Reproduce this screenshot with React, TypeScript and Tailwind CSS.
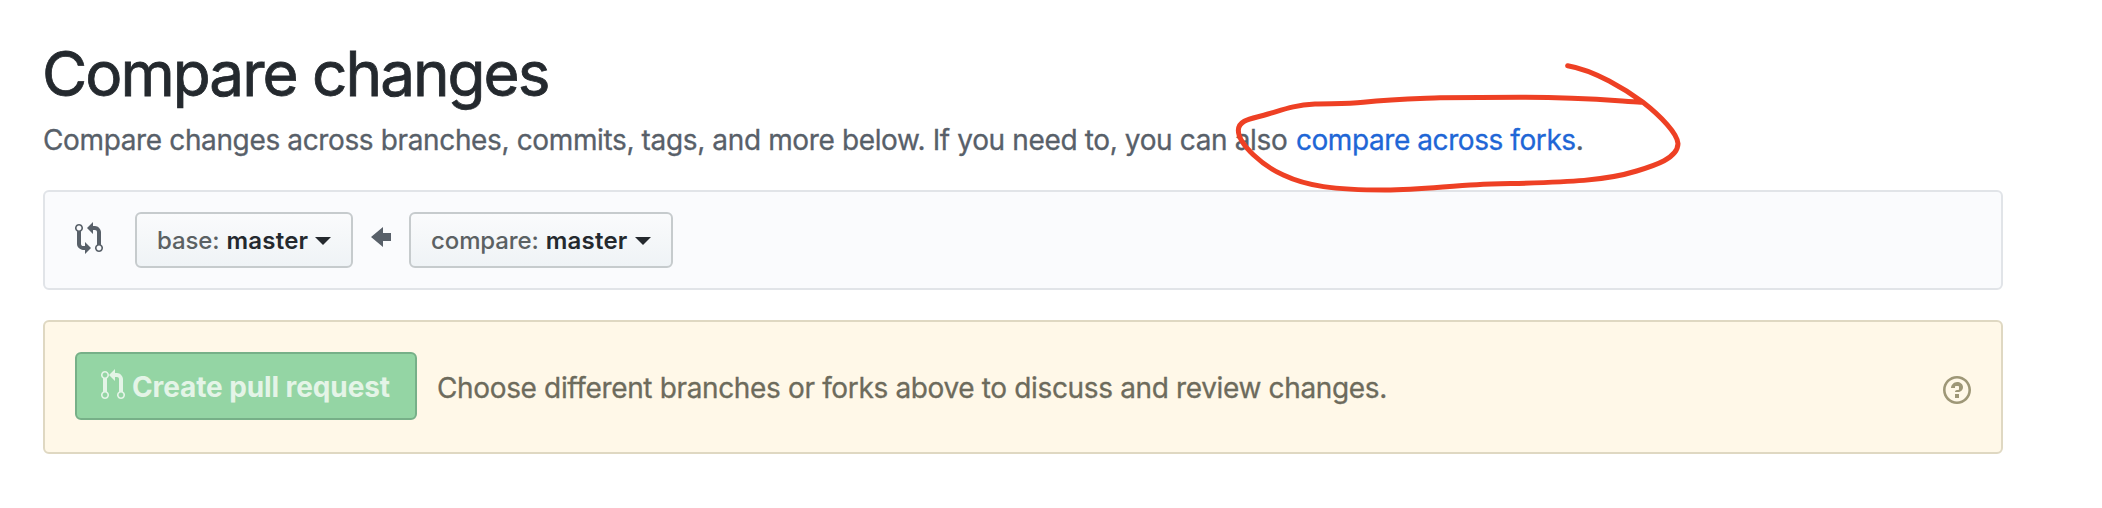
import type { ReactNode } from "react";

const icons = {
  compare: {
    width: 14,
    d: "M5 12H4c-.27-.02-.48-.11-.69-.31-.21-.2-.3-.42-.31-.69V4.72A1.993 1.993 0 0 0 2 1a1.993 1.993 0 0 0-1 3.72V11c.03.78.34 1.47.94 2.06.6.59 1.28.91 2.06.94h1v2l3-3-3-3v2zM2 1.8c.66 0 1.2.55 1.2 1.2 0 .65-.55 1.2-1.2 1.2C1.35 4.2.8 3.65.8 3c0-.65.55-1.2 1.2-1.2zm11 9.48V5c-.03-.78-.34-1.47-.94-2.06-.6-.59-1.28-.91-2.06-.94H9V0L6 3l3 3V4h1c.27.02.48.11.69.31.21.2.3.42.31.69v6.28A1.993 1.993 0 0 0 12 15a1.993 1.993 0 0 0 1-3.72zm-1 2.92c-.66 0-1.2-.55-1.2-1.2 0-.65.55-1.2 1.2-1.2.65 0 1.2.55 1.2 1.2 0 .65-.55 1.2-1.2 1.2z",
  },
  pullRequest: {
    width: 12,
    d: "M11 11.28V5c-.03-.78-.34-1.47-.94-2.06C9.46 2.35 8.78 2.03 8 2H7V0L4 3l3 3V4h1c.27.02.48.11.69.31.21.2.3.42.31.69v6.28A1.993 1.993 0 0 0 10 15a1.993 1.993 0 0 0 1-3.72zm-1 2.92c-.66 0-1.2-.55-1.2-1.2 0-.65.55-1.2 1.2-1.2.65 0 1.2.55 1.2 1.2 0 .65-.55 1.2-1.2 1.2zM4 3c0-1.11-.89-2-2-2a1.993 1.993 0 0 0-1 3.72v6.56A1.993 1.993 0 0 0 2 15a1.993 1.993 0 0 0 1-3.72V4.72c.59-.34 1-.98 1-1.72zm-.8 10c0 .66-.55 1.2-1.2 1.2-.65 0-1.2-.55-1.2-1.2 0-.65.55-1.2 1.2-1.2.65 0 1.2.55 1.2 1.2zM2 4.2C1.34 4.2.8 3.65.8 3c0-.65.55-1.2 1.2-1.2.65 0 1.2.55 1.2 1.2 0 .65-.55 1.2-1.2 1.2z",
  },
  arrowLeft: { width: 10, d: "M6 3L0 8l6 5v-3h4V6H6z" },
  question: {
    width: 14,
    d: "M6 10h2v2H6v-2zm4-3.5C10 8.64 8 9 8 9H6c0-.55.45-1 1-1h.5c.28 0 .5-.22.5-.5v-1c0-.28-.22-.5-.5-.5h-1c-.28 0-.5.22-.5.5V7H4c0-1.5 1.5-3 3-3s3 1 3 2.5zM7 2.3c3.14 0 5.7 2.56 5.7 5.7s-2.56 5.7-5.7 5.7A5.71 5.71 0 0 1 1.3 8c0-3.14 2.56-5.7 5.7-5.7zM7 1C3.14 1 0 4.14 0 8s3.14 7 7 7 7-3.14 7-7-3.14-7-7-7z",
  },
};

function Icon({ name, className = "" }: { name: keyof typeof icons; className?: string }) {
  const { width, d } = icons[name];
  return (
    <svg
      className={`shrink-0 ${className}`}
      width={width * 2}
      height={32}
      viewBox={`0 0 ${width} 16`}
      fill="currentColor"
      fillRule="evenodd"
      aria-hidden="true"
    >
      <path d={d} />
    </svg>
  );
}

function BranchButton({ label, className, children }: { label: string; className: string; children: ReactNode }) {
  return (
    <button
      className={`flex h-14 shrink-0 items-center rounded-md border-2 border-[#c6cbcd] bg-linear-to-b from-[#fafbfc] to-[#eff3f6] px-5 pt-0.5 text-2xl whitespace-nowrap ${className}`}
    >
      <span className="font-medium tracking-[-0.1px] text-[#5b6163]">{label}:</span>
      <span className="ml-[7px] font-semibold tracking-[0.2px] text-[#24292e]">{children}</span>
      <span className="ml-auto border-x-8 border-t-8 border-x-transparent border-t-[#24292e]" />
    </button>
  );
}

export default function App() {
  return (
    <main className="relative h-[508px] w-[2102px] overflow-hidden bg-white pt-[26px] pl-[43px] font-['Inter',sans-serif]">
      <h1 className="ml-[-1px] text-[62px] leading-24 font-normal tracking-[-2px] text-[#24292e] [-webkit-text-stroke:0.8px_#24292e]">
        Compare changes
      </h1>
      <p className="mt-[-3px] text-[28px] leading-[42px] tracking-[-0.365px] whitespace-nowrap text-[#586069] [-webkit-text-stroke:0.3px_currentColor]">
        Compare changes across branches, commits, tags, and more below. If you need to, you can also{" "}
        <a className="ml-px tracking-[-0.42px] text-[#2066d6]">compare across forks</a>.
      </p>

      <section className="mt-[29px] flex h-[100px] w-[1960px] items-center rounded-md border-2 border-[#e1e4e8] bg-[#fafbfd] pl-[30px] text-[#586069]">
        <Icon name="compare" className="-mt-1" />
        <BranchButton label="base" className="ml-8 w-[218px]">master</BranchButton>
        <Icon name="arrowLeft" className="mx-[18px] -mt-1.5" />
        <BranchButton label="compare" className="w-[264px]">master</BranchButton>
      </section>

      <section className="mt-[30px] flex h-[134px] w-[1960px] items-center rounded-md border-2 border-[#dfd8c2] bg-[#fff8e8] px-[30px]">
        <button className="-mt-0.5 flex h-[68px] w-[342px] shrink-0 items-center rounded-md border-2 border-[#77b088] bg-[#94d5a4] pl-6 text-[28px] font-bold tracking-[-0.1px] whitespace-nowrap text-[#e4f4e7]">
          <Icon name="pullRequest" className="-mt-0.5" />
          <span className="mt-0.5 ml-[7px]">Create pull request</span>
        </button>
        <p className="mt-0.5 ml-5 text-[28px] tracking-[-0.35px] whitespace-nowrap text-[#6d6b5c] [-webkit-text-stroke:0.3px_currentColor]">
          Choose different branches or forks above to discuss and review changes.
        </p>
        <Icon name="question" className="mt-1.5 ml-auto text-[#9e9777]" />
      </section>

      <svg
        className="pointer-events-none absolute top-10 left-[1200px]"
        width="500"
        height="170"
        viewBox="0 0 1500 510"
        fill="none"
        stroke="#ee4024"
        strokeWidth="15"
        strokeLinecap="round"
        strokeLinejoin="round"
        aria-hidden="true"
      >
        <path d="M1103 77C1185 91 1278 149 1328 186C1382 228 1433 281 1434 311C1433 355 1365 376 1310 393C1198 428 1070 426 830 434C740 438 660 450 555 450C400 450 320 438 250 405C190 379 115 314 115 271C116 237 160 236 204 222C255 207 282 196 345 192C390 190 440 193 490 187C580 177 650 176 720 173L960 172C1140 171 1250 183 1323 187" />
      </svg>
    </main>
  );
}
